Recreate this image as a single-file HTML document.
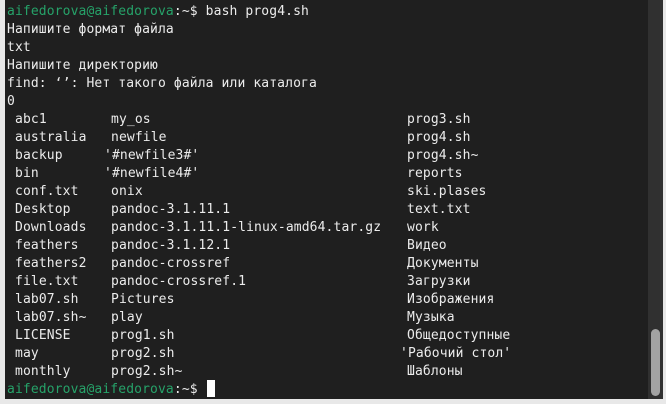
<!DOCTYPE html>
<html><head><meta charset="utf-8"><style>
html,body{margin:0;padding:0;width:666px;height:404px;overflow:hidden;background:#e8e8e8;}
#t{position:absolute;left:5px;top:0;width:643px;height:399px;background:#1f1f1f;}
#sb{position:absolute;left:648px;top:0;width:15px;height:399px;background:#303030;}
#th{position:absolute;left:651px;top:329px;width:9px;height:67px;background:#a3a3a3;border-radius:5px;}
.l{position:absolute;font-family:"DejaVu Sans Mono","Liberation Mono",monospace;font-size:13px;line-height:18px;color:#ececec;white-space:pre;letter-spacing:0.12px;}
.g{color:#26a269;}
#cur{position:absolute;left:207px;top:380px;width:8px;height:17px;background:#fff;}
</style></head><body>
<div id="t"></div><div id="sb"></div><div id="th"></div>
<div class="l" style="left:7px;top:3px"><span class="g">aifedorova@aifedorova</span>:~$ bash prog4.sh
Напишите формат файла
txt
Напишите директорию
find: ‘’: Нет такого файла или каталога
0</div>
<div class="l" style="left:15px;top:111px">abc1
australia
backup
bin
conf.txt
Desktop
Downloads
feathers
feathers2
file.txt
lab07.sh
lab07.sh~
LICENSE
may
monthly</div>
<div class="l" style="left:111px;top:111px">my_os
newfile
<span style="margin-left:-7px">'#newfile3#'</span>
<span style="margin-left:-7px">'#newfile4#'</span>
onix
pandoc-3.1.11.1
pandoc-3.1.11.1-linux-amd64.tar.gz
pandoc-3.1.12.1
pandoc-crossref
pandoc-crossref.1
Pictures
play
prog1.sh
prog2.sh
prog2.sh~</div>
<div class="l" style="left:407px;top:111px">prog3.sh
prog4.sh
prog4.sh~
reports
ski.plases
text.txt
work
Видео
Документы
Загрузки
Изображения
Музыка
Общедоступные
<span style="margin-left:-7px">'Рабочий стол'</span>
Шаблоны</div>
<div class="l" style="left:7px;top:381px"><span class="g">aifedorova@aifedorova</span>:~$ </div>
<div id="cur"></div>
</body></html>
